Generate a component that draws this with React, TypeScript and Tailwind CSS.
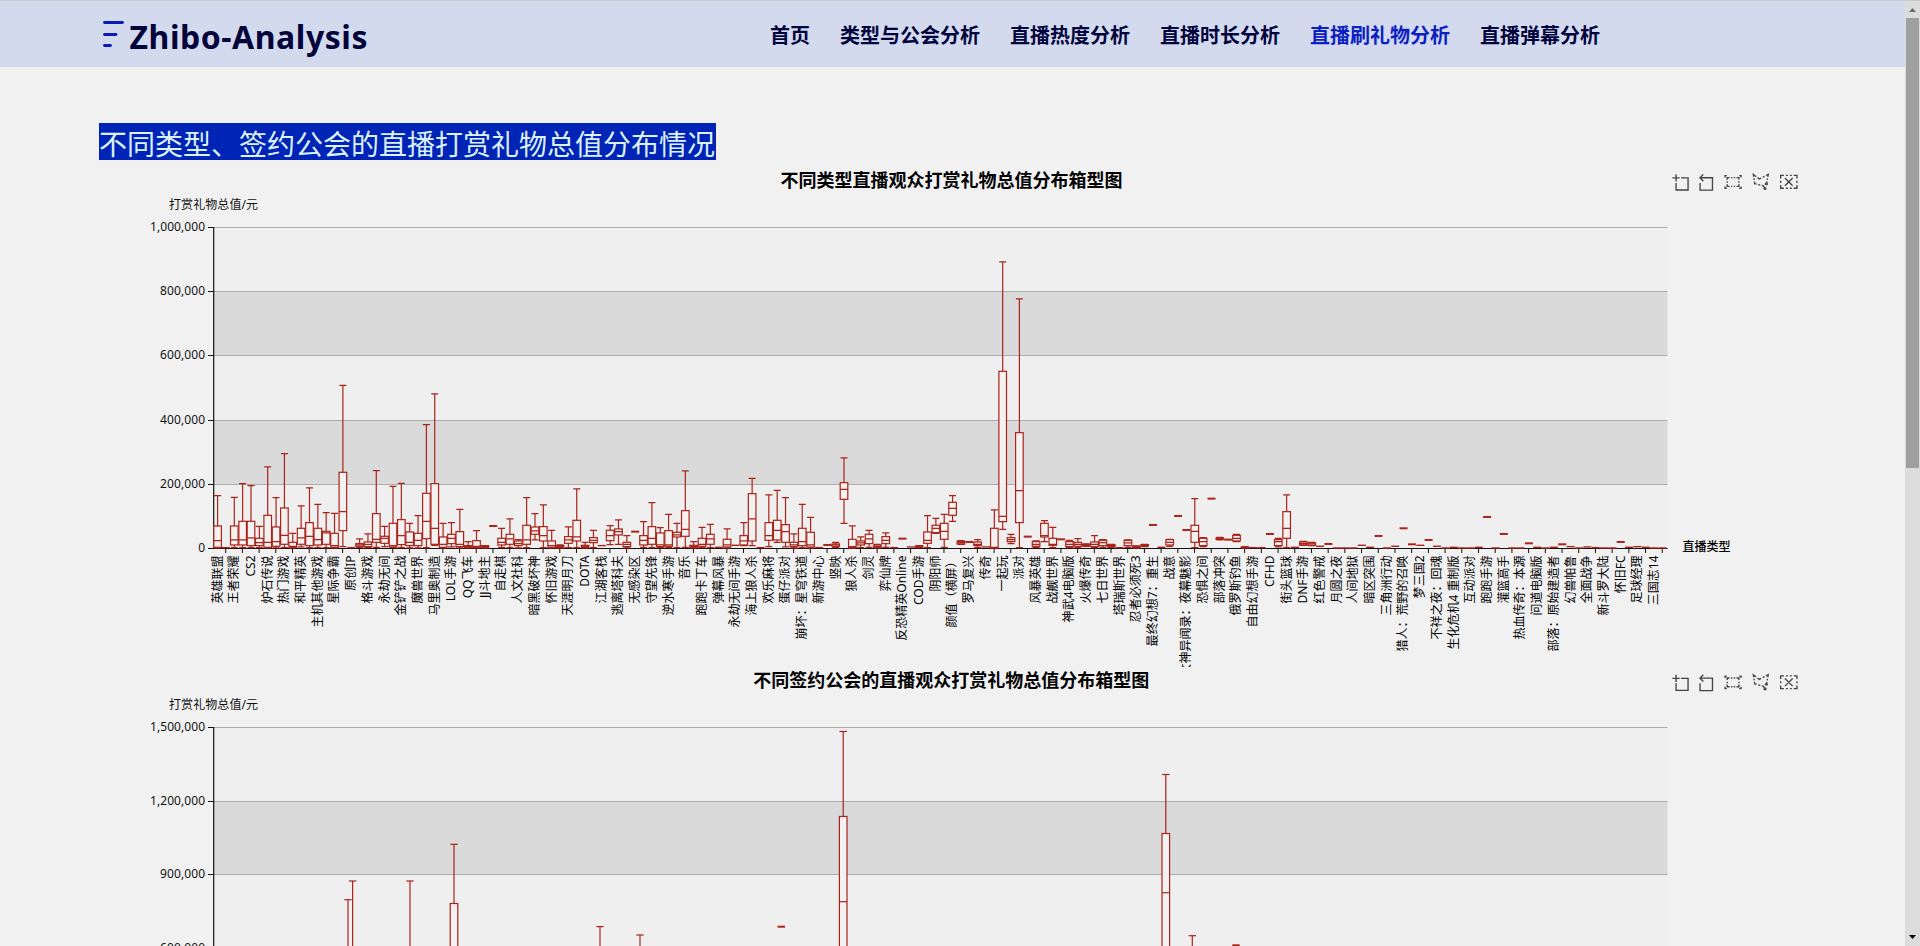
import React from "react";

const FONT = '"Noto Sans", "Noto Sans CJK SC", sans-serif';
const LEFT = 213.7;
const RIGHT = 1667.5;
const BAND = 8.352;
const RED = "#a9231a";

const NAV = ["首页", "类型与公会分析", "直播热度分析", "直播时长分析", "直播刷礼物分析", "直播弹幕分析"];
const ACTIVE = "直播刷礼物分析";

const CATEGORIES = [
  "英雄联盟", "王者荣耀", "CS2", "炉石传说", "热门游戏", "和平精英", "主机其他游戏", "星际争霸", "原创IP", "格斗游戏",
  "永劫无间", "金铲铲之战", "魔兽世界", "马里奥制造", "LOL手游", "QQ飞车", "JJ斗地主", "自走棋", "人文社科", "暗黑破坏神",
  "怀旧游戏", "天涯明月刀", "DOTA", "江湖客栈", "逃离塔科夫", "无感染区", "守望先锋", "逆水寒手游", "音乐", "跑跑卡丁车",
  "弹幕风暴", "永劫无间手游", "海上狼人杀", "欢乐麻将", "蛋仔派对", "崩坏：星穹铁道", "新游中心", "竖映", "狼人杀", "剑灵",
  "弈仙牌", "反恐精英Online", "COD手游", "阴阳师", "颜值（横屏）", "罗马复兴", "传奇", "一起玩", "派对", "风暴英雄",
  "战舰世界", "神武4电脑版", "火爆传奇", "七日世界", "塔瑞斯世界", "忍者必须死3", "最终幻想7：重生", "战意", "女神异闻录：夜幕魅影", "恐惧之间",
  "部落冲突", "俄罗斯钓鱼", "自由幻想手游", "CFHD", "街头篮球", "DNF手游", "红色警戒", "月圆之夜", "人间地狱", "暗区突围",
  "三角洲行动", "猎人：荒野的召唤", "梦三国2", "不祥之夜：回魂", "生化危机4 重制版", "互动派对", "跑跑手游", "灌篮高手", "热血传奇：本源", "问道电脑版",
  "部落：原始建造者", "幻兽帕鲁", "全面战争", "新斗罗大陆", "怀旧FC", "足球经理", "三国志14",
];

// Each entry is [min, q1, median, q3, max]; a single number is a flat box.
type Entry = number | [number, number, number, number, number];
const GIFTS: Entry[] = [
  [1, 3, 23, 67, 158], 2, [2, 10, 25, 67, 153], [2, 10, 25, 81, 194], [2, 8, 31, 81, 188], [2, 8, 17, 30, 66], [1, 3, 18, 99, 244], [1, 6, 20, 64, 152], [2, 12, 39, 121, 284], [1, 3, 6, 18, 45],
  [4, 12, 31, 60, 127], [2, 8, 36, 77, 181], [2, 10, 26, 60, 132], [2, 12, 46, 51, 107], [1, 3, 8, 45, 105], [5, 53, 110, 228, 489], 2, [3, 6, 10, 14, 28], [2, 5, 12, 19, 43], [3, 18, 27, 104, 233],
  [5, 15, 30, 36, 66], [2, 4, 8, 75, 186], [2, 11, 38, 86, 195], [1, 8, 18, 49, 75], [1, 8, 24, 45, 98], [2, 29, 81, 165, 371], [9, 12, 60, 194, 463], [1, 3, 12, 34, 75], [4, 14, 30, 42, 77], [1, 5, 12, 50, 117],
  [1, 3, 6, 8, 20], [1, 3, 6, 23, 53], [1, 2, 5, 8, 8], 67, [3, 10, 18, 30, 60], [2, 12, 28, 42, 88], [1, 8, 14, 22, 26], [2, 12, 25, 69, 152], [25, 42, 52, 64, 104], [2, 22, 38, 65, 130],
  [1, 3, 8, 22, 54], [1, 2, 5, 8, 10], [2, 15, 25, 35, 64], [2, 22, 34, 84, 178], [1, 3, 6, 9, 18], [2, 17, 24, 32, 54], 8, [11, 23, 38, 54, 68], [12, 40, 50, 58, 85], [1, 5, 12, 18, 38],
  50, [3, 10, 24, 38, 80], [2, 12, 30, 65, 137], [2, 5, 10, 46, 62], [2, 6, 10, 53, 102], [2, 34, 40, 48, 75], [3, 36, 57, 113, 232], [1, 3, 6, 9, 20], [2, 6, 12, 30, 63], [2, 12, 28, 42, 72],
  3, [1, 4, 10, 27, 58], 9, [8, 10, 22, 38, 77], [8, 22, 88, 164, 210], 2, [5, 24, 38, 77, 160], [18, 25, 54, 84, 174], [4, 18, 50, 71, 152], [1, 5, 10, 18, 43],
  [2, 8, 20, 60, 132], [1, 4, 10, 48, 93], 2, 10, [3, 6, 10, 13, 18], [75, 147, 177, 197, 271], [1, 2, 5, 27, 67], [2, 10, 16, 22, 34], [3, 14, 28, 42, 54], [1, 3, 6, 10, 12],
  [3, 14, 24, 35, 46], 2, 29, 4, [2, 3, 5, 7, 8], [2, 15, 24, 49, 98], [45, 47, 60, 69, 90], [3, 27, 51, 75, 102], [81, 99, 120, 138, 158], [12, 13, 17, 21, 23],
  19, [2, 8, 12, 19, 26], 4, [1, 1, 3, 60, 115], [57, 80, 96, 531, 859], [14, 20, 26, 32, 42], [2, 77, 173, 347, 748], 35, [3, 6, 12, 20, 22], [20, 34, 38, 75, 83],
  [2, 9, 12, 30, 63], 27, [2, 5, 12, 20, 24], [2, 6, 12, 18, 29], [6, 8, 10, 12, 13], [2, 5, 12, 19, 38], [3, 8, 17, 24, 26], [3, 5, 8, 11, 12], 2, [3, 8, 16, 24, 25],
  [1, 2, 4, 6, 7], [5, 7, 9, 11, 12], 70, 3, [6, 10, 18, 26, 27], 97, 55, [2, 18, 51, 69, 149], [5, 8, 20, 30, 32], 149,
  [25, 27, 29, 31, 33], 26, [20, 22, 30, 39, 42], [1, 2, 3, 4, 5], 2, 2, 43, [4, 8, 20, 26, 30], [2, 30, 60, 110, 160],
  3, [9, 10, 14, 19, 21], [8, 9, 13, 16, 18], 6, 13, 1, 1, 1, 9, 3, 37, 1, 6, 60, 12, 9, 25, 6, 1, 3, 1, 1, 3, 94, 1, 43, 1, 1, 15, 3, 1, 3, 12, 5, 1, 4, 2, 1, 1, 19, 3, 5, 3, 1, 1,
];

const GUILDS: { x: number; max: number; q3?: number; median?: number; flat?: boolean }[] = [
  { x: 348, max: 899.7 },
  { x: 352.6, max: 881 },
  { x: 410, max: 881 },
  { x: 454, max: 844.3, q3: 903.5 },
  { x: 600, max: 926.6 },
  { x: 640, max: 935 },
  { x: 781.3, max: 926.7, flat: true },
  { x: 843.2, max: 731.5, q3: 816.5, median: 901.7 },
  { x: 1165.8, max: 774.5, q3: 833.5, median: 892.7 },
  { x: 1192.3, max: 935.7 },
  { x: 1236, max: 945.3, flat: true },
];

const TOOLS = [
  { t: "translate(1672.4 174.3) scale(0.27)", d: "M0,13.5h26.9 M13.5,26.9V0 M32.1,13.5H58V58H13.5V32.1" },
  { t: "translate(1697.2 174) scale(0.278)", d: "M22,1.4L9.9,13.5l12.3,12.3 M10.3,13.5H54.9v44.6H10.3v-26" },
  {
    t: "translate(1725 175.7) scale(0.179)",
    d: "M0.4,10V-0.2h9.8 M89.6,10V-0.2h-9.8 M0.4,60v10.2h9.8 M89.6,60v10.2h-9.8 M12.3,22.4V10.5h13.1 M33.6,10.5h7.8 M49.1,10.5h7.8 M77.5,22.4V10.5h-13 M12.3,31.1v8.2 M77.7,31.1v8.2 M12.3,47.6v11.9h13.1 M33.6,59.5h7.6 M49.1,59.5h7.7 M77.5,47.6v11.9h-13",
  },
  {
    t: "translate(1750.6 173) scale(0.286)",
    d: "M55.2,34.9c1.7,0,3.1,1.4,3.1,3.1s-1.4,3.1-3.1,3.1s-3.1-1.4-3.1-3.1S53.5,34.9,55.2,34.9z M50.4,51c1.7,0,3.1,1.4,3.1,3.1c0,1.7-1.4,3.1-3.1,3.1c-1.7,0-3.1-1.4-3.1-3.1C47.3,52.4,48.7,51,50.4,51z M55.6,37.1l1.5-7.8 M60.1,13.5l1.6-8.7l-7.8,4 M59,19l-1,5.3 M24,16.1l6.4,4.9l6.4-3.3 M48.5,11.6l-5.9,3.1 M19.1,12.8L9.7,5.1l1.1,7.7 M13.4,29.8l1,7.3l6.6,1.6 M11.6,18.4l1,6.1 M26.6,40.4l7.3,1.8 M39,43.4l5,1.2l4,6",
  },
  {
    t: "translate(1779.5 174.4) scale(0.248)",
    d: "M22,14.7l30.9,31 M52.9,14.7L22,45.7 M4.7,16.8V4.2h13.1 M26,4.2h7.8 M41.6,4.2h7.8 M70.3,16.8V4.2H57.2 M4.7,25.9v8.6 M70.3,25.9v8.6 M4.7,43.2v12.6h13.1 M26,55.8h7.8 M41.6,55.8h7.8 M70.3,43.2v12.6H57.2",
  },
];

function Toolbox({ dy }: { dy: number }) {
  return (
    <g transform={`translate(0 ${dy})`} fill="none" stroke="#444">
      {TOOLS.map((tool) => (
        <path key={tool.t} transform={tool.t} d={tool.d} strokeWidth={1.35} vectorEffect="non-scaling-stroke" />
      ))}
    </g>
  );
}

function Frame({ title, titleX, dy, base, step, labels, bottom }: {
  title: string; titleX: number; dy: number; base: number; step: number; labels: string[]; bottom: number;
}) {
  const line = (i: number) => Math.round(base + i * step) + 0.5;
  return (
    <g>
      <text x={titleX} y={186.5 + dy} fontSize={18} fontWeight={700} textAnchor="middle" fill="#000">{title}</text>
      <text x={169} y={208.9 + dy} fontSize={12} textLength={89} fill="#111">打赏礼物总值/元</text>
      <Toolbox dy={dy} />
      {labels.slice(0, -1).map((l, i) => (
        <rect key={l} x={LEFT} y={line(i)} width={RIGHT - LEFT} height={line(i + 1) - line(i)} fill={i % 2 ? "#dadada" : "#efefef"} />
      ))}
      {labels.map((l, i) => (
        <g key={l}>
          <path d={`M${LEFT} ${line(i)}H${RIGHT}`} stroke="#acacac" />
          <path d={`M208 ${line(i)}H${LEFT}`} stroke="#111" />
          <text x={205} y={line(i) + 3.4} fontSize={12} textAnchor="end" fill="#111" textLength={l.length > 7 ? 55 : l.length === 7 ? 45 : undefined}>{l}</text>
        </g>
      ))}
      <path d={`M213.7 ${line(0) - 0.5}V${bottom}`} stroke="#111" strokeWidth={1.2} />
    </g>
  );
}

function GiftBox({ entry, i }: { entry: Entry; i: number }) {
  const x = 217.6 + i * BAND;
  const y = (v: number) => 548.3 - v / 3;
  if (typeof entry === "number") {
    return <path d={`M${x - 4} ${y(entry)}h8`} stroke={RED} strokeWidth={entry < 10 ? 1.4 : 2} />;
  }
  const [lo, q1, med, q3, hi] = entry;
  return (
    <g stroke={RED} strokeWidth={1.2} fill="none">
      <rect x={x - 3.8} y={y(q3)} width={7.6} height={(q3 - q1) / 3} fill="#f4f1f1" />
      <path d={`M${x - 3.8} ${y(med)}h7.6M${x} ${y(q3)}V${y(hi)}M${x - 3.5} ${y(hi)}h7M${x} ${y(q1)}V${y(lo)}M${x - 3.5} ${y(lo)}h7`} />
    </g>
  );
}

function TypeChart() {
  return (
    <svg className="block" width="1905" height="500" viewBox="0 167 1905 500" fontFamily={FONT}>
      <Frame title="不同类型直播观众打赏礼物总值分布箱型图" titleX={951.5} dy={0} base={226.7} step={64.3} bottom={549}
        labels={["1,000,000", "800,000", "600,000", "400,000", "200,000", "0"]} />
      <path d={`M${LEFT} 548.5H${RIGHT}`} stroke="#111" strokeWidth={1.2} />
      {CATEGORIES.map((c, i) => {
        const x = 217.2 + i * 2 * BAND;
        return (
          <g key={c}>
            <path d={`M${x + 8.5} 548v5`} stroke="#111" />
            <text transform={`translate(${x + 4.3} 555.5) rotate(-90)`} textAnchor="end" fontSize={12} fill="#000">{c}</text>
          </g>
        );
      })}
      {GIFTS.map((e, i) => <GiftBox key={i} entry={e} i={i} />)}
      <text x={1682.5} y={550.8} fontSize={12} fontWeight={500} fill="#000">直播类型</text>
    </svg>
  );
}

function GuildChart() {
  return (
    <svg className="block" width="1905" height="279" viewBox="0 667 1905 279" fontFamily={FONT}>
      <Frame title="不同签约公会的直播观众打赏礼物总值分布箱型图" titleX={951.3} dy={500.4} base={727} step={73.6} bottom={960}
        labels={["1,500,000", "1,200,000", "900,000", "600,000"]} />
      {GUILDS.map((g) => (
        <g key={g.x} stroke={RED} strokeWidth={1.2} fill="none">
          <path d={`M${g.x - 3.7} ${g.max}h7.4`} strokeWidth={g.flat ? 2 : 1.2} />
          {!g.flat && <path d={`M${g.x} ${g.max}V${g.q3 ?? 960}`} />}
          {g.q3 && <rect x={g.x - 3.8} y={g.q3} width={7.6} height={150} fill="#f3f1f1" />}
          {g.median && <path d={`M${g.x - 3.8} ${g.median}h7.6`} />}
        </g>
      ))}
    </svg>
  );
}

export default function App() {
  return (
    <div className="flex h-[946px] w-[1920px] overflow-hidden bg-[#f1f1f1] font-['Noto_Sans','Noto_Sans_CJK_SC',sans-serif]">
      <div className="flex w-[1905px] shrink-0 flex-col">
        <header className="flex h-[67px] shrink-0 items-center border-t border-[#c8ccd3] bg-[#d4daee]">
          <div className="flex w-[770px] shrink-0 items-center pl-[102px]">
            <svg width="24" height="30" viewBox="0 0 24 30" fill="none" stroke="#0a1cb4" strokeWidth="2.8" strokeLinecap="round">
              <path d="M2.5 3.5H20.5M2.5 15.5H14M2.5 26.5H8.5" />
            </svg>
            <svg className="ml-[3px] overflow-visible" width="240" height="44" viewBox="0 0 240 44" fontFamily={FONT}>
              <text x="0.5" y="36.5" fontSize="32" fontWeight="700" textLength="238" fill="#02043a">Zhibo-Analysis</text>
            </svg>
          </div>
          <nav className="flex gap-[30px] pt-[3px] text-[20px] font-bold leading-[30px] text-[#01043c]">
            {NAV.map((item) => (
              <a key={item} className={item === ACTIVE ? "whitespace-nowrap text-[#0b20c2]" : "whitespace-nowrap"}>{item}</a>
            ))}
          </nav>
        </header>
        <main className="flex flex-col pt-[56px]">
          <h2 className="mb-[7px] ml-[99px] h-[37px] w-[617px] whitespace-nowrap bg-[#0024b6] text-[28px] leading-[42px] text-[#dcf1fb]">
            不同类型、签约公会的直播打赏礼物总值分布情况
          </h2>
          <TypeChart />
          <GuildChart />
        </main>
      </div>
      <aside className="flex w-[15px] shrink-0 flex-col items-center justify-between border-t border-[#c8c8c8] bg-[#dcdcdc]">
        <div className="flex flex-col items-center">
          <svg width="13" height="17" viewBox="0 0 13 17"><path d="M3 11L6.5 7L10 11Z" fill="#6a6a6a" /></svg>
          <div className="h-[450px] w-[13px] bg-[#9f9f9f]" />
        </div>
        <svg width="13" height="17" viewBox="0 0 13 17"><path d="M3 6L10 6L6.5 10Z" fill="#000" /></svg>
      </aside>
    </div>
  );
}
